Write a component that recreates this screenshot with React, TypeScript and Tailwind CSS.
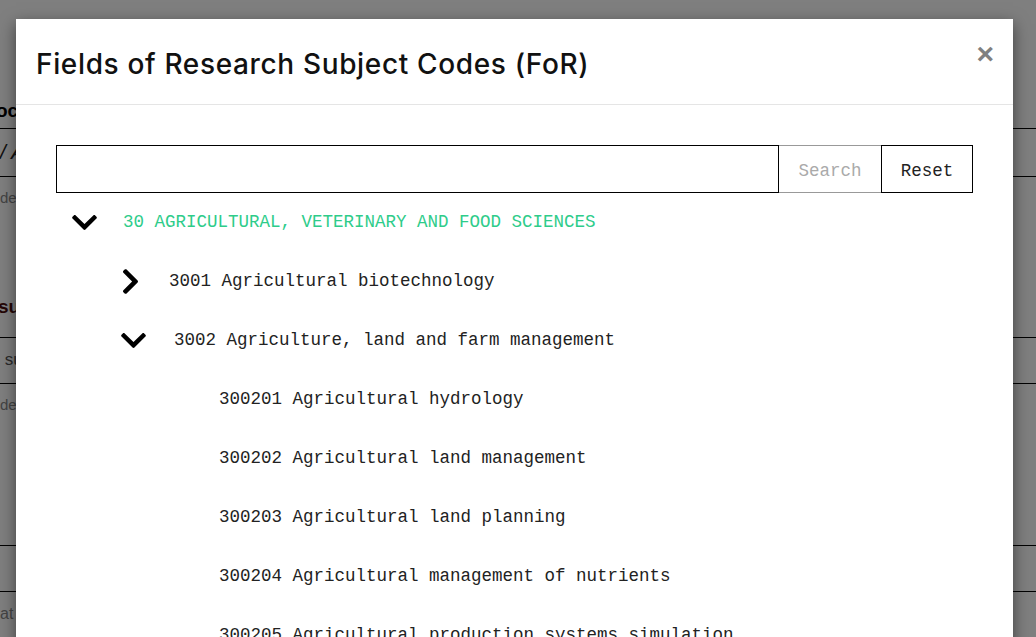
import { FaChevronDown, FaChevronRight } from 'react-icons/fa'

const leaves = [
  '300201 Agricultural hydrology',
  '300202 Agricultural land management',
  '300203 Agricultural land planning',
  '300204 Agricultural management of nutrients',
  '300205 Agricultural production systems simulation',
  '300206 Agricultural spatial analysis and modelling',
]

const mono = { fontFamily: '"Liberation Mono", "DejaVu Sans Mono", monospace' }

function BackgroundPage() {
  return (
    <div className="absolute inset-0 bg-white text-black" style={{ fontFamily: '"Liberation Sans", Arial, sans-serif' }}>
      <div className="h-[93px]" />
      <div className="h-[35px] -ml-[4px] text-[19px] font-bold leading-[35px]">oc</div>
      <div className="h-[48px] border-t border-black text-[21px] italic leading-[46px] text-[#222]">/ A</div>
      <div className="h-[100px] border-t border-black text-[15px] leading-[42px] text-[#888]">de</div>
      <div className="h-[61px] -ml-[2px] text-[19px] font-bold leading-[61px] text-[#4a0d0d]">sul</div>
      <div className="h-[46px] border-t border-black text-[17px] leading-[44px] text-[#555]">&nbsp;su</div>
      <div className="h-[162px] border-t border-black text-[15px] leading-[42px] text-[#888]">de</div>
      <div className="h-[46px] border-t border-black" />
      <div className="h-[46px] border-t border-black text-[16px] leading-[44px] text-[#888]">at</div>
      <div className="absolute inset-0 bg-black/50" />
    </div>
  )
}

export default function App() {
  return (
    <div className="relative h-[637px] w-full overflow-hidden">
      <BackgroundPage />

      <div className="absolute left-[16px] top-[19px] h-[700px] w-[997px] bg-white shadow-[0_5px_15px_rgba(0,0,0,0.5)]">
        {/* header */}
        <div className="flex h-[86px] items-start justify-between border-b border-[#e5e5e5] px-[20px]">
          <h1
            className="flex h-full items-center pt-[4px] text-[28px] font-medium tracking-[0.65px] text-[#111]"
            style={{ fontFamily: 'Inter, "Noto Sans", sans-serif' }}
          >
            Fields of Research Subject Codes (FoR)
          </h1>
          <button
            className="mt-[20px] -mr-[1px] text-[30px] font-bold leading-none text-[#808080]"
            style={{ fontFamily: '"Liberation Sans", Arial, sans-serif' }}
          >
            ×
          </button>
        </div>

        {/* body */}
        <div className="px-[40px] pt-[40px] text-[17.5px] text-[#222]" style={mono}>
          <div className="flex h-[48px]">
            <input className="min-w-0 flex-1 border border-black px-3 outline-none" style={mono} />
            <button className="w-[102px] border-y border-[#999] pt-[4px] text-[#aaa]">Search</button>
            <button className="w-[92px] border border-black pt-[4px] text-[#222]">Reset</button>
          </div>

          <div className="flex h-[59px] items-center">
            <span className="ml-[14px] flex w-[29px] justify-center text-black">
              <FaChevronDown size={29} />
            </span>
            <span className="ml-[24px] text-[#2ecc8a]">30 AGRICULTURAL, VETERINARY AND FOOD SCIENCES</span>
          </div>

          <div className="flex h-[59px] items-center">
            <span className="ml-[60px] flex w-[29px] justify-center text-black">
              <FaChevronRight size={29} />
            </span>
            <span className="ml-[24px]">3001 Agricultural biotechnology</span>
          </div>

          <div className="flex h-[59px] items-center">
            <span className="ml-[63px] flex w-[29px] justify-center text-black">
              <FaChevronDown size={29} />
            </span>
            <span className="ml-[26px]">3002 Agriculture, land and farm management</span>
          </div>

          {leaves.map((leaf) => (
            <div key={leaf} className="flex h-[59px] items-center pl-[163px]">
              {leaf}
            </div>
          ))}
        </div>
      </div>
    </div>
  )
}
